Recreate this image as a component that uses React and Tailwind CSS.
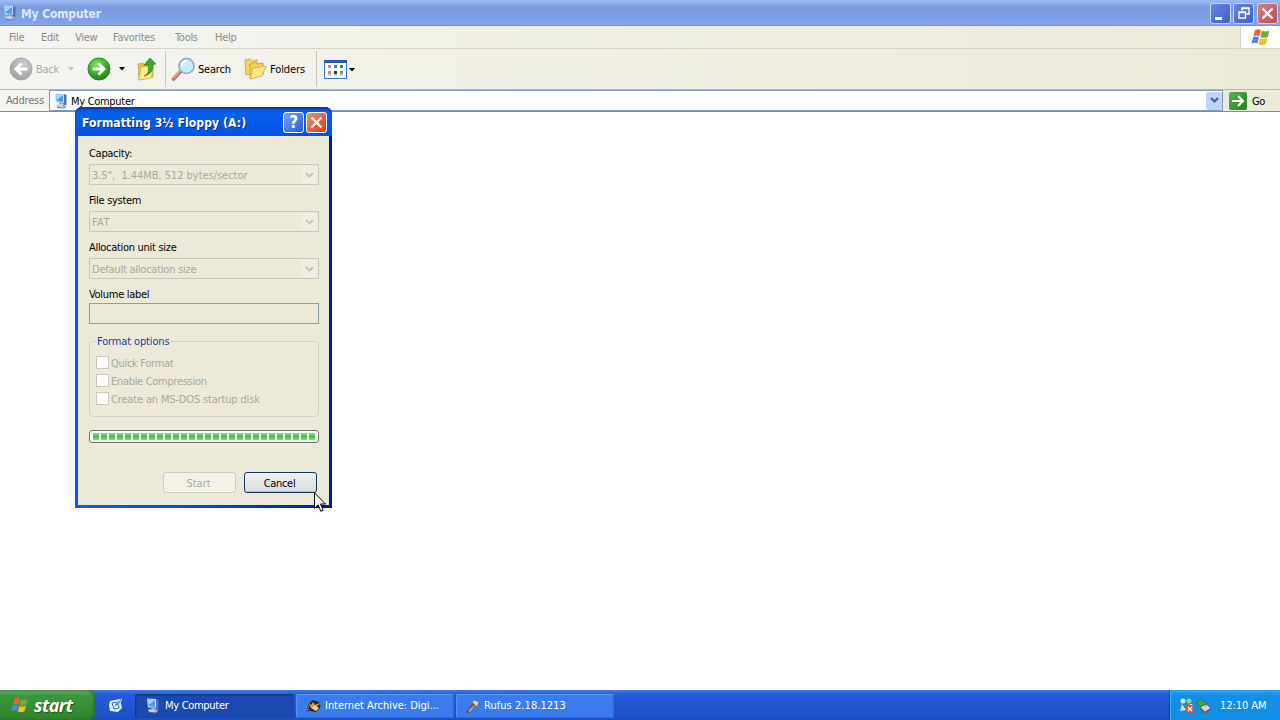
import clsx from "clsx";

const menuItems = [
  { label: "File", width: "w-[32px]" },
  { label: "Edit", width: "w-[34px]" },
  { label: "View", width: "w-[38px]" },
  { label: "Favorites", width: "w-[62px]" },
  { label: "Tools", width: "w-[40px]" },
  { label: "Help", width: "w-[30px]" },
];

const fields = [
  { label: "Capacity:", value: '3.5",  1.44MB, 512 bytes/sector', tracking: "tracking-[-0.04px]" },
  { label: "File system", value: "FAT", tracking: "tracking-[0.4px]" },
  { label: "Allocation unit size", value: "Default allocation size", tracking: "tracking-[-0.23px]" },
];

const options = [
  { label: "Quick Format", tracking: "tracking-[-0.3px]" },
  { label: "Enable Compression", tracking: "tracking-[-0.3px]" },
  { label: "Create an MS-DOS startup disk", tracking: "tracking-[-0.16px]" },
];

function ComputerIcon({ size = 16 }) {
  return (
    <svg width={size} height={size} viewBox="0 0 16 16" className="shrink-0">
      <path d="M10 1l3.500 .8v10l-3.500 1z" fill="#4a72bd" />
      <path d="M2 .5l9 .4v9L3 9.600z" fill="#c6dcf5" />
      <path d="M3 1.500l7 .4v7l-6.200-.6z" fill="#4c9fe8" />
      <path d="M3 1.500l7 .4-6.400 5z" fill="#9bd8fb" />
      <path d="M6 9.300l3.500.3.5 2-3.600-.2z" fill="#8fa4c8" />
      <path d="M3 11.500l7-.4 3 1.600-2 2-7-.8z" fill="#c4d0e6" />
      <path d="M4 13.800l7 .9 2-2v1.200l-2 1.700-7-.8z" fill="#55699c" />
      <circle cx="10.500" cy="12.800" r="1" fill="#d77e76" />
    </svg>
  );
}

function WindowsFlag({ width, height }) {
  return (
    <svg width={width} height={height} viewBox="0 0 20 18" className="shrink-0">
      <path d="M4 2.200C6.200.8 8 1 10 2.200L8.300 8.500C6.400 7.300 4.500 7.200 2.300 8.500z" fill="#e9653a" />
      <path d="M11 2.600c2.300 1.200 4.500 1.300 7.500 0L16.800 9c-2.800 1.200-5 1.100-7.400-.1z" fill="#75ad3d" />
      <path d="M2 9.500c2.200-1.300 4.200-1.200 6.100 0L6.400 15.700C4.500 14.500 2.500 14.500.3 15.700z" fill="#4a88dc" />
      <path d="M9.200 10c2.300 1.100 4.500 1.200 7.400 0l-1.800 6.200c-2.800 1.200-5 1.100-7.300 0z" fill="#f4bd32" />
    </svg>
  );
}

function RoundArrow({ flip, disabled }) {
  return (
    <svg width="24" height="24" viewBox="0 0 24 24" className={clsx("shrink-0", flip && "-scale-x-100")}>
      <defs>
        <radialGradient id={disabled ? "grayBall" : "greenBall"} cx="40%" cy="30%" r="70%">
          <stop offset="0" stopColor={disabled ? "#cecece" : "#8ade63"} />
          <stop offset="0.6" stopColor={disabled ? "#b2b2b2" : "#41ad2c"} />
          <stop offset="1" stopColor={disabled ? "#a0a0a0" : "#218213"} />
        </radialGradient>
      </defs>
      <circle cx="12" cy="12" r="11" fill={`url(#${disabled ? "grayBall" : "greenBall"})`} stroke={disabled ? "#a8a8a8" : "#2a861d"} />
      <path d="M5.500 12h11M11.500 6.500l5.500 5.500-5.500 5.500" fill="none" stroke="#fff" strokeWidth="2.800" />
    </svg>
  );
}

function UpFolderIcon() {
  return (
    <svg width="20" height="24" viewBox="0 0 20 24" className="shrink-0">
      <path d="M1 7l5-1 2 2 8-1v13L2 23z" fill="#e6bd4a" stroke="#c79a35" strokeWidth=".7" />
      <path d="M4 10l13-2-3 13-12 2z" fill="#fdec8d" stroke="#d5aa3c" strokeWidth=".7" />
      <path d="M7 19c5-2 5-6 4-11H7l6-7 6 6-3.500.5c1 6-2 10-8.500 11.500z" fill="#43a62e" stroke="#247d1b" strokeWidth=".7" />
    </svg>
  );
}

function SearchIcon() {
  return (
    <svg width="25" height="25" viewBox="0 0 25 25" className="shrink-0">
      <path d="M10 14l-7.500 8" stroke="#b5705a" strokeWidth="3.600" strokeLinecap="round" />
      <path d="M9.500 13.500L2.500 21" stroke="#e9ae8b" strokeWidth="1.500" strokeLinecap="round" />
      <circle cx="15.500" cy="9" r="7.500" fill="#c6ebfc" stroke="#8ea5d0" strokeWidth="1.600" />
      <path d="M11 9c0-3 2-5 5-5" stroke="#fff" strokeWidth="2" fill="none" />
    </svg>
  );
}

function FoldersIcon() {
  return (
    <svg width="23" height="22" viewBox="0 0 23 22" className="shrink-0">
      <path d="M1 2l5-1 2 2 5-1v13L2 17z" fill="#f8d55f" stroke="#d9ab43" />
      <path d="M6 6l5-2 2 2 6-1v12L6 20z" fill="#f7cf5c" stroke="#d3a33b" />
      <path d="M9 10l13-2-4 10-12 3z" fill="#ffe98a" stroke="#dbb04a" />
    </svg>
  );
}

function ViewsIcon() {
  return (
    <svg width="23" height="19" viewBox="0 0 23 19" className="shrink-0">
      <rect x=".5" y=".5" width="22" height="18" fill="#fff" stroke="#2f7ad0" />
      <path d="M0 0h23v3H0z" fill="#225bb4" />
      <path d="M4 5h3v3H4zM4 11h3v3H4z" fill="#c98b77" />
      <path d="M10 5h3v3h-3z" fill="#417fc8" />
      <path d="M10 11h3v3h-3z" fill="#183767" />
      <path d="M16 5h3v3h-3z" fill="#3f853a" />
      <path d="M16 11h3v3h-3z" fill="#799f6d" />
      <path d="M4 15h3M10 15h3M16 15h3" stroke="#8aa6c8" />
    </svg>
  );
}

function Caret({ className }) {
  return (
    <svg width="6" height="4" viewBox="0 0 6 4" className={clsx("shrink-0", className)}>
      <path d="M0 0h6L3 3.500z" fill="currentColor" />
    </svg>
  );
}

function Chevron({ className }) {
  return (
    <svg width="9" height="7" viewBox="0 0 9 7" className={className}>
      <path d="M1 1l3.500 3.500L8 1" fill="none" stroke="currentColor" strokeWidth="2.200" />
    </svg>
  );
}

function CloseIcon() {
  return (
    <svg width="13" height="13" viewBox="0 0 13 13">
      <path d="M1.500 1.500l10 10M11.500 1.500l-10 10" stroke="#fff" strokeWidth="2.200" />
    </svg>
  );
}

function TitleBar() {
  return (
    <div className="flex h-[26px] shrink-0 items-center bg-linear-to-b from-[#9ebcf3] via-[#7b99de] via-30% to-[#83a5ee] pl-[2px] pr-[2px] shadow-[inset_0_-1px_#7892d0]">
      <ComputerIcon />
      <span className="ml-[3px] grow pt-px text-[12px] font-bold tracking-[-0.13px] text-[#dce8fd]">My Computer</span>
      <div className="flex gap-[2px]">
        <div className="flex h-[21px] w-[21px] items-end rounded-[3px] border border-[#c5d6fb] bg-linear-to-br from-[#6484e3] to-[#3f62cb] pb-[3px] pl-[4px]">
          <div className="h-[3px] w-[7px] bg-white" />
        </div>
        <div className="flex h-[21px] w-[21px] items-center justify-center rounded-[3px] border border-[#c5d6fb] bg-linear-to-br from-[#6484e3] to-[#3f62cb]">
          <svg width="12" height="12" viewBox="0 0 12 12">
            <path d="M4 3.500V1h7v6H8.500M3 1.500h8" fill="none" stroke="#fff" strokeWidth="1.400" />
            <path d="M1 5h6.500v6H1zM1 5.500h6.500" fill="none" stroke="#fff" strokeWidth="1.400" />
          </svg>
        </div>
        <div className="ml-px flex h-[21px] w-[21px] items-center justify-center rounded-[3px] border border-[#d6cfe6] bg-linear-to-br from-[#cf7f87] to-[#b84f57]">
          <CloseIcon />
        </div>
      </div>
    </div>
  );
}

function MenuBar() {
  return (
    <div className="flex h-[23px] shrink-0 border-b border-[#d8d5c7] bg-linear-to-r from-[#f4f4f1] to-[#ece9d8] text-[#8d8c86]">
      <div className="flex grow items-center pl-[9px] pt-px">
        {menuItems.map((item) => (
          <span key={item.label} className={clsx("shrink-0", item.width)}>
            {item.label}
          </span>
        ))}
      </div>
      <div className="flex w-[40px] items-center justify-center border-l border-[#d4d1c2] bg-white">
        <WindowsFlag width={20} height={18} />
      </div>
    </div>
  );
}

function Toolbar() {
  return (
    <div className="flex h-[41px] shrink-0 items-center border-b border-[#b9b7aa] bg-linear-to-r from-[#f4f4f1] to-[#ece9d8] pl-[9px]">
      <RoundArrow flip disabled />
      <span className="ml-[3px] w-[27px] pt-px text-[#a9a8a2]">Back</span>
      <Caret className="ml-[5px] text-[#c2c1bb]" />
      <div className="ml-[13px] flex items-center">
        <RoundArrow />
        <Caret className="ml-[8px]" />
      </div>
      <div className="ml-[12px] flex w-[28px]">
        <UpFolderIcon />
      </div>
      <div className="h-[36px] w-px bg-[#c8c6ba]" />
      <div className="ml-[5px] flex w-[67px] items-center">
        <SearchIcon />
        <span className="ml-[2px] pt-[2px] tracking-[-0.2px]">Search</span>
      </div>
      <div className="ml-[6px] flex w-[72px] items-center">
        <FoldersIcon />
        <span className="ml-[3px] pt-[2px] tracking-[-0.1px]">Folders</span>
      </div>
      <div className="h-[36px] w-px bg-[#c8c6ba]" />
      <div className="ml-[7px] flex items-center pt-px">
        <ViewsIcon />
        <Caret className="ml-[2px]" />
      </div>
    </div>
  );
}

function AddressBar() {
  return (
    <div className="flex h-[22px] shrink-0 items-center border-b border-[#8b8b84] bg-linear-to-r from-[#f4f4f1] to-[#ece9d8]">
      <span className="w-[49px] pl-[6px] pt-px tracking-[-0.2px] text-[#77766f]">Address</span>
      <div className="flex h-[21px] w-[1174px] items-center border border-[#7f9db9] bg-white pl-[3px]">
        <ComputerIcon />
        <span className="ml-[2px] grow pt-[3px]">My Computer</span>
        <div className="flex h-[18px] w-[16px] items-center justify-center rounded-[2px] bg-[#c3d2fa]">
          <Chevron className="text-[#485f91]" />
        </div>
      </div>
      <div className="ml-[6px] flex h-[18px] w-[18px] items-center justify-center rounded-[2px] bg-linear-to-br from-[#5bb454] to-[#1d7d20]">
        <svg width="14" height="12" viewBox="0 0 14 12">
          <path d="M1 6h10M7 1l5 5-5 5" fill="none" stroke="#fff" strokeWidth="2" />
        </svg>
      </div>
      <span className="ml-[5px] pt-[2px]">Go</span>
    </div>
  );
}

function FormatDialog() {
  return (
    <div className="absolute left-[75px] top-[107px] flex h-[401px] w-[257px] flex-col rounded-t-[7px] bg-linear-to-r from-[#0c5ce8] via-[#0648cf] to-[#001c9e] px-[3px] pb-[3px]">
      <div className="-mx-[3px] flex h-[29px] shrink-0 items-center rounded-t-[7px] bg-linear-to-b from-[#0a4fd0] via-[#0560f0] via-25% to-[#0453df] pl-[7px] pr-[5px] pt-[2px] shadow-[inset_0_2px_1px_#073fb0]">
        <span className="grow whitespace-nowrap pt-px text-[12px] font-bold tracking-[0.12px] text-white [text-shadow:1px_1px_#0a2f8c]">Formatting 3½ Floppy (A:)</span>
        <div className="mr-[2px] flex h-[21px] w-[21px] items-center justify-center rounded-[3px] border border-white bg-linear-to-br from-[#7aa2f5] to-[#2459dc] text-[17px] font-bold leading-none text-white">
          ?
        </div>
        <div className="flex h-[21px] w-[21px] items-center justify-center rounded-[3px] border border-white bg-linear-to-br from-[#ee8f71] to-[#cf3a13]">
          <CloseIcon />
        </div>
      </div>
      <div className="flex grow flex-col bg-[#ece9d8] pl-[11px] pt-[9px]">
        {fields.map((field) => (
          <div key={field.label} className="mb-[7px] flex flex-col">
            <span className="mb-[3px] h-[16px] leading-[18px]">{field.label}</span>
            <div className="flex h-[21px] w-[230px] items-center border border-[#c9c7ba] pl-[2px] pr-px">
              <span className={clsx("grow whitespace-pre pt-[2px] text-[#aaa899]", field.tracking)}>{field.value}</span>
              <div className="flex h-[17px] w-[16px] items-center justify-center rounded-[2px] bg-[#f0eee3] pt-px">
                <Chevron className="text-[#c6c4b6]" />
              </div>
            </div>
          </div>
        ))}
        <span className="mb-px h-[16px] leading-[18px]">Volume label</span>
        <div className="h-[21px] w-[230px] shrink-0 border border-[#8f9bb0]" />

        <fieldset className="mt-[9px] h-[84px] w-[230px] shrink-0 rounded-[4px] border border-[#d5d2c2] pl-[6px]">
          <legend className="h-[16px] px-px leading-[18px] tracking-[-0.14px] text-[#1c3c9c]">Format options</legend>
          <div className="mt-[5px] flex flex-col">
            {options.map((option) => (
              <div key={option.label} className="flex h-[18px] items-center pb-px text-[#aaa899]">
                <div className="mr-[3px] h-[13px] w-[13px] border border-[#cbc9bb] bg-white" />
                <span className={clsx("-ml-px whitespace-nowrap pt-[3px]", option.tracking)}>{option.label}</span>
              </div>
            ))}
          </div>
        </fieldset>

        <div className="mt-[13px] flex h-[13px] w-[230px] shrink-0 items-center gap-[2px] rounded-[3px] border border-[#70706c] bg-[#f2fff0] pl-[3px]">
          {Array.from({ length: 28 }, (_, i) => (
            <div key={i} className="h-[7px] w-[6px] shrink-0 bg-linear-to-b from-[#80df80] via-[#45bd4b] to-[#80df80]" />
          ))}
        </div>

        <div className="mt-[29px] flex gap-[8px] pl-[74px]">
          <div className="flex h-[21px] w-[73px] items-center justify-center rounded-[3px] border border-[#cfccbd] bg-[#f4f2e8] pr-[2px] pt-[2px] tracking-[0px] text-[#aaa899]">Start</div>
          <div className="flex h-[21px] w-[73px] items-center justify-center rounded-[3px] border border-[#12375f] bg-linear-to-b from-[#f1f1ed] to-[#dadce2] pr-[2px] pt-[2px] shadow-[inset_0_-1px_#b6c2d8]">Cancel</div>
        </div>
      </div>
    </div>
  );
}

function Cursor() {
  return (
    <svg width="13" height="21" viewBox="0 0 13 21" className="absolute left-[314px] top-[492px]">
      <path d="M.5.800v15.500l3.600-3.500 2.700 6.500 2.400-1-2.700-6.300h5z" fill="#fff" stroke="#000" />
    </svg>
  );
}

function TaskButton({ icon, label, active, className }) {
  return (
    <div className={clsx("flex h-[24px] items-center gap-[4px] rounded-[2px] text-white", active ? "bg-[#1c49af] shadow-[inset_1px_1px_2px_#12367f]" : "bg-[#3a7cee] shadow-[inset_1px_1px_1px_#5c95f5,inset_-1px_-1px_1px_#2f6bd8]", className)}>
      {icon}
      <span className="whitespace-nowrap">{label}</span>
    </div>
  );
}

function ArchiveIcon() {
  return (
    <svg width="14" height="14" viewBox="0 0 14 14" className="shrink-0">
      <path d="M1 5l5-4 6 2 1 6-4 4-6-1z" fill="#2b2923" />
      <path d="M1 3l3 3 2-3 2 3 4-2-1 4-7 1z" fill="#d7a24b" />
      <path d="M4 9l4-2 4 2-3 3z" fill="#ead7a4" />
      <path d="M0 9l3 1M0 12l4-1M10 7h4" stroke="#282820" />
    </svg>
  );
}

function UsbIcon() {
  return (
    <svg width="15" height="15" viewBox="0 0 15 15" className="shrink-0">
      <path d="M1 12l7-8 4 3-7 7H2z" fill="#555a68" />
      <path d="M3 12l6-6 2 1-6 6z" fill="#99a2b3" />
      <path d="M7 3l2-2 5 2-2 5z" fill="#d5d7db" stroke="#6a6a76" strokeWidth=".7" />
      <circle cx="9" cy="7" r="1.200" fill="#d6654b" />
    </svg>
  );
}

function Taskbar() {
  return (
    <div className="flex h-[30px] shrink-0 bg-linear-to-b from-[#3e7ce8] via-[#245bd9] via-15% to-[#1d4ec1]">
      <div className="flex w-[96px] items-center rounded-r-[8px] bg-linear-to-b from-[#65a866] via-[#3c973c] via-20% to-[#2f822c] pl-[11px] shadow-[inset_-2px_0_3px_#246e25]">
        <WindowsFlag width={18} height={18} />
        <span className="ml-[5px] pb-px font-['Open_Sans'] text-[18px] font-bold italic leading-none tracking-[-0.6px] text-white [text-shadow:1px_1px_1px_#24521f]">start</span>
      </div>
      <div className="flex w-[39px] items-center justify-center">
        <svg width="15" height="15" viewBox="0 0 15 15">
          <path d="M2 3l10-2 2 9-4 4-8-1-1-6z" fill="#d9edfb" />
          <path d="M4 5l6-1 1 6-5 1z" fill="#fff" stroke="#2361ad" />
          <path d="M6 9l1-3 6-5 1 1-5 6z" fill="#508bc9" stroke="#eef" strokeWidth=".6" />
        </svg>
      </div>
      <div className="flex grow items-center gap-[2px] pt-[2px]">
        <TaskButton active icon={<ComputerIcon />} label="My Computer" className="w-[159px] pl-[10px]" />
        <TaskButton icon={<ArchiveIcon />} label="Internet Archive: Digi..." className="w-[158px] pl-[11px] tracking-[-0.04px]" />
        <TaskButton icon={<UsbIcon />} label="Rufus 2.18.1213" className="w-[158px] pl-[9px] tracking-[0.05px]" />
      </div>
      <div className="flex w-[111px] items-center border-l border-[#123f92] bg-linear-to-b from-[#29a5f2] via-[#138ee6] via-20% to-[#118fe4] pl-[9px] text-white shadow-[inset_1px_0_#3db8f5]">
        <svg width="35" height="17" viewBox="0 0 35 17" className="shrink-0">
          <circle cx="4" cy="4" r="2.500" fill="#d6eaf4" />
          <circle cx="10" cy="4" r="2.500" fill="#91cc9b" />
          <path d="M1 14l2-7h3l2 3 2-3h3l2 5z" fill="#cbdce7" />
          <path d="M3 7l4 6 4-6" fill="#4d8192" />
          <circle cx="11" cy="12" r="4" fill="#d85931" />
          <path d="M9 10l4 4M13 10l-4 4" stroke="#fff" strokeWidth="1.200" />
          <path d="M21 10l6-3 5 4-6 4z" fill="#d3d5df" stroke="#555b76" strokeWidth=".8" />
          <path d="M21 11l5 4 6-4v2l-6 4-5-4z" fill="#66647e" />
          <path d="M19 4l3-2 1 2h4v4h-4l-1 2-4-3z" fill="#42ad34" stroke="#25722b" strokeWidth=".6" />
        </svg>
        <span className="ml-[6px] whitespace-nowrap pt-[2px] tracking-[-0.06px]">12:10 AM</span>
      </div>
    </div>
  );
}

export default function App() {
  return (
    <div className="relative flex h-[720px] w-[1280px] flex-col overflow-hidden bg-white font-['DejaVu_Sans_Condensed','DejaVu_Sans',sans-serif] text-[11px] leading-[14px] tracking-[-0.3px] text-black">
      <TitleBar />
      <MenuBar />
      <Toolbar />
      <AddressBar />
      <div className="grow bg-white" />
      <Taskbar />
      <FormatDialog />
      <Cursor />
    </div>
  );
}
